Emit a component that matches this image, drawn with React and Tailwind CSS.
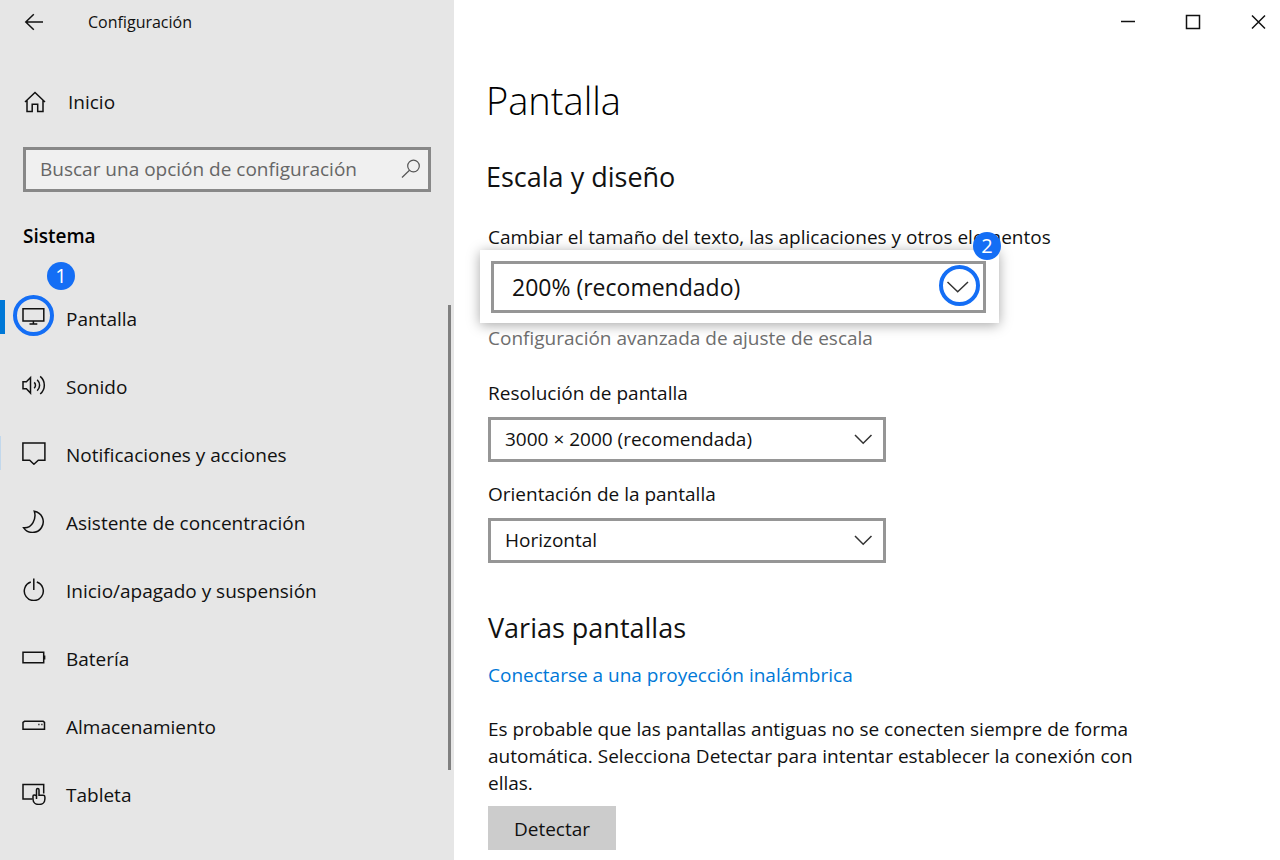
import React from "react";

function Icon({ children, size = 24, className = "" }) {
  return (
    <svg
      width={size}
      height={size}
      viewBox={`0 0 ${size} ${size}`}
      fill="none"
      stroke="currentColor"
      strokeWidth="1.5"
      className={`shrink-0 ${className}`}
      aria-hidden="true"
    >
      {children}
    </svg>
  );
}

const navItems = [
  {
    label: "Pantalla",
    active: true,
    icon: (
      <Icon>
        <path d="M1 3.800h20.800v12.200H1zM11.400 16v3M7.500 19h7.800" />
      </Icon>
    ),
  },
  {
    label: "Sonido",
    icon: (
      <Icon>
        <path d="M1 8.800h3.400L8.500 4.600v15.500l-4.100-4.300H1z" />
        <path d="M12.200 9.400c1.700 1.700 1.700 4.100 0 5.800M15.200 6.800c3.200 3.200 3.200 7.800 0 11M18.200 3.400c5.500 4.800 5.500 12.700 0 17.600" />
      </Icon>
    ),
  },
  {
    label: "Notificaciones y acciones",
    marked: true,
    icon: (
      <Icon>
        <path d="M.9 1.900h22v17.300h-6.600l-4.400 4-4.200-4H.9z" />
      </Icon>
    ),
  },
  {
    label: "Asistente de concentración",
    icon: (
      <Icon>
        <path d="M12.300 2.200a10.700 10.700 0 1 1-10.600 16.600C10 19.500 14.700 9.600 12.300 2.200z" />
      </Icon>
    ),
  },
  {
    label: "Inicio/apagado y suspensión",
    icon: (
      <Icon>
        <path d="M11.800 1.600v11.400M8.800 5a9.500 9.500 0 1 0 6 0" />
      </Icon>
    ),
  },
  {
    label: "Batería",
    icon: (
      <Icon>
        <path d="M1 7.300h20.700v10.400H1zM22.600 10.600v3.800" />
      </Icon>
    ),
  },
  {
    label: "Almacenamiento",
    icon: (
      <Icon>
        <path d="M2.500 8.300h18.700l1.300 1v6.900H1V9.300z" />
        <path d="M16.300 11.500h1.200M19.300 11.500h1.200" />
      </Icon>
    ),
  },
  {
    label: "Tableta",
    icon: (
      <Icon>
        <path d="M10.500 18H1V3.500h20.700v9" />
        <path d="M14.500 18V8.700c0-1.700 2.500-1.700 2.500 0v5.500h4.200c1 0 1.700.7 1.700 1.700v2c0 7.500-11.900 7.500-11.900 0v-2.700c0-1.600 1.700-1.600 3.500-.4" />
      </Icon>
    ),
  },
];

function Badge({ children, className }) {
  return (
    <span
      className={`absolute flex size-7 items-center justify-center rounded-full bg-[#146ef5] text-xl leading-none text-white ${className}`}
    >
      {children}
    </span>
  );
}

function Ring({ className }) {
  return (
    <span
      className={`pointer-events-none absolute size-[41px] rounded-full border-4 border-[#146ef5] ${className}`}
    />
  );
}

function Select({ id, value, large }) {
  return (
    <div className="relative">
      <select
        id={id}
        defaultValue={value}
        className={
          large
            ? "block h-[52px] w-full appearance-none border-3 border-[#969696] bg-white pr-12 pl-[18px] text-[23px]"
            : "block h-[45px] w-full appearance-none border-3 border-[#969696] bg-white pr-12 pb-0.5 pl-3.5 text-[19px]"
        }
      >
        <option>{value}</option>
      </select>
      <Icon
        className={
          large
            ? "pointer-events-none absolute top-3.5 right-4 text-[#333333]"
            : "pointer-events-none absolute top-2.5 right-2.5 text-[#333333]"
        }
      >
        <path d={large ? "M1.500 7l10.200 9.700L22 7" : "M3 8l8.200 8.300L19.500 8"} />
      </Icon>
      {large && <Ring className="top-1 right-1.5" />}
    </div>
  );
}

function Sidebar() {
  return (
    <aside className="w-[454px] shrink-0 bg-[#e6e6e6]">
      <header className="flex h-11 items-center pl-[22px]">
        <button type="button" aria-label="Atrás">
          <Icon>
            <path d="M3.500 12H21M11.800 4.200L3.800 12l8 7.800" />
          </Icon>
        </button>
        <span className="ml-[42px] text-[16px]">Configuración</span>
      </header>

      <a href="#inicio" className="mt-[37px] flex h-[42px] items-center gap-[22px] pl-[22px]">
        <Icon>
          <path d="M3 12L13 2.500 23 12M5 10.500v11h5.200v-7.200h5.500v7.200H21v-11" />
        </Icon>
        Inicio
      </a>

      <div className="relative mt-6 mr-[23px] ml-[23px]">
        <input
          type="search"
          aria-label="Buscar una opción de configuración"
          placeholder="Buscar una opción de configuración"
          className="block h-[45px] w-full border-3 border-[#888888] bg-[#f0f0f0] pr-11 pb-0.5 pl-3.5 placeholder:text-[#666666]"
        />
        <Icon className="absolute top-2.5 right-2 text-[#555555]">
          <circle cx="14.500" cy="9" r="5.800" strokeWidth="1.200" />
          <path d="M10.500 13.200L3 20.500" strokeWidth="1.200" />
        </Icon>
      </div>

      <h2 className="mt-[31px] pl-[23px] leading-[26px] font-semibold text-black">Sistema</h2>

      <div className="mt-9 flex pr-[3px]">
        <nav className="min-w-0 flex-1">
          {navItems.map((item) => (
            <a
              key={item.label}
              href="#"
              className="relative flex h-[68px] items-center gap-5 pl-[22px]"
            >
              {item.active && (
                <>
                  <span className="absolute top-[15px] left-0 h-[34px] w-[5px] bg-[#0078d7]" />
                  <Ring className="top-2.5 left-[13px]" />
                  <Badge className="-top-[23px] left-[47px]">1</Badge>
                </>
              )}
              {item.marked && (
                <span className="absolute top-[15px] left-0 h-[34px] w-px bg-[#c2d8ec]" />
              )}
              <span className="pb-1">{item.icon}</span>
              {item.label}
            </a>
          ))}
        </nav>
        <div className="mt-5 h-[465px] w-[3px] bg-[#808080]" />
      </div>
    </aside>
  );
}

function WindowControls() {
  return (
    <div className="flex h-11 justify-end gap-[21px]">
      <button type="button" aria-label="Minimizar" className="flex w-11 items-center justify-center">
        <Icon>
          <path d="M5 11.500h14" />
        </Icon>
      </button>
      <button type="button" aria-label="Maximizar" className="flex w-11 items-center justify-center">
        <Icon>
          <path d="M5.500 5.500h13v13h-13z" />
        </Icon>
      </button>
      <button type="button" aria-label="Cerrar" className="flex w-11 items-center justify-center">
        <Icon>
          <path d="M6 5.500l13 13M19 5.500l-13 13" />
        </Icon>
      </button>
    </div>
  );
}

export default function App() {
  return (
    <div className="flex min-h-screen bg-white font-['Open_Sans','Noto_Sans',sans-serif] text-[19px] leading-[26px] text-[#111111]">
      <Sidebar />
      <main className="min-w-0 flex-1">
        <WindowControls />
        <div className="pr-8 pl-[34px]">
          <div className="-ml-0.5">
            <h1 className="mt-[30px] text-[38px] leading-[52px] font-light text-black">Pantalla</h1>
            <h2 className="mt-[31px] text-[27px] leading-10">Escala y diseño</h2>
          </div>
          <label htmlFor="scale" className="mt-[27px] block">
            Cambiar el tamaño del texto, las aplicaciones y otros elementos
          </label>
          <div className="relative -ml-2 max-w-[519px] bg-white pt-[11px] pr-[13px] pb-2.5 pl-[11px] shadow-[0_2px_12px_rgba(0,0,0,0.35)]">
            <Select id="scale" value="200% (recomendado)" large />
            <Badge className="-top-[18px] -right-0.5">2</Badge>
          </div>
          <a href="#" className="mt-0.5 block text-[#6e6e6e]">
            Configuración avanzada de ajuste de escala
          </a>

          <div className="mt-[29px] max-w-[398px]">
            <label htmlFor="resolution" className="mb-[11px] block">
              Resolución de pantalla
            </label>
            <Select id="resolution" value="3000 × 2000 (recomendada)" />
          </div>
          <div className="mt-[19px] max-w-[398px]">
            <label htmlFor="orientation" className="mb-[11px] block">
              Orientación de la pantalla
            </label>
            <Select id="orientation" value="Horizontal" />
          </div>

          <h2 className="mt-[45px] text-[27px] leading-10">Varias pantallas</h2>
          <a href="#" className="mt-3.5 block text-[#0078d7]">
            Conectarse a una proyección inalámbrica
          </a>
          <p className="mt-7 max-w-[660px] leading-[27px]">
            Es probable que las pantallas antiguas no se conecten siempre de forma automática.
            Selecciona Detectar para intentar establecer la conexión con ellas.
          </p>
          <button type="button" className="mt-[9px] mb-2 h-11 w-32 bg-[#cccccc] pt-0.5">
            Detectar
          </button>
        </div>
      </main>
    </div>
  );
}
